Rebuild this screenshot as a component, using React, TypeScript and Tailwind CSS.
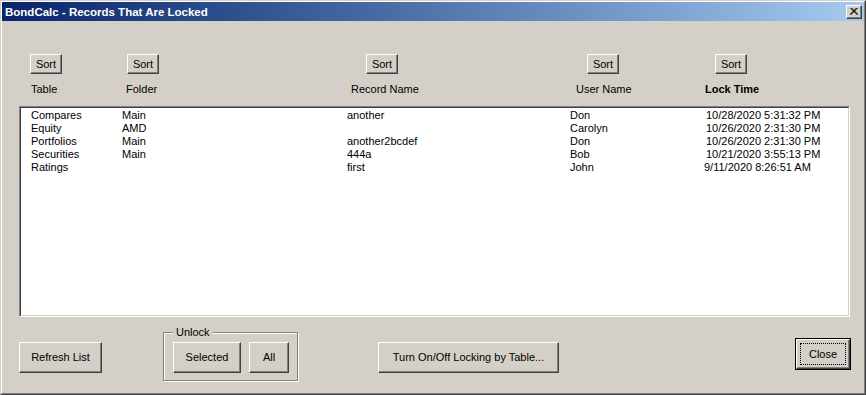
import React from "react";

const font = { fontFamily: '"Liberation Sans", Arial, sans-serif' };

function WinButton({
  children,
  className = "",
}: {
  children: React.ReactNode;
  className?: string;
}) {
  return (
    <div
      className={
        "flex items-center justify-center border border-t-white border-l-white border-r-[#404040] border-b-[#404040] bg-[#d4d0c8] shadow-[inset_-1px_-1px_#808080] text-[11px] leading-[13px] text-black shrink-0 " +
        className
      }
    >
      {children}
    </div>
  );
}

const rows = [
  ["Compares", "Main", "another", "Don", "10/28/2020 5:31:32 PM"],
  ["Equity", "AMD", "", "Carolyn", "10/26/2020 2:31:30 PM"],
  ["Portfolios", "Main", "another2bcdef", "Don", "10/26/2020 2:31:30 PM"],
  ["Securities", "Main", "444a", "Bob", "10/21/2020 3:55:13 PM"],
  ["Ratings", "", "first", "John", "9/11/2020 8:26:51 AM"],
];

export default function App() {
  return (
    <div className="w-[866px] h-[395px] bg-[#d4d0c8] text-black" style={font}>
      <div className="w-full h-full border border-t-[#d4d0c8] border-l-[#d4d0c8] border-r-[#404040] border-b-[#404040] flex flex-col">
        <div className="flex-1 border border-t-white border-l-white border-r-[#808080] border-b-[#808080] flex flex-col">
          {/* Title bar */}
          <div className="h-[19px] flex items-center justify-between pl-[3px] pr-[2px] bg-gradient-to-r from-[#0a246a] to-[#a6caf0]">
            <span className="text-white font-bold text-[11.5px] leading-[14px]">
              BondCalc - Records That Are Locked
            </span>
            <div className="w-[16px] h-[14px] flex items-center justify-center border border-t-white border-l-white border-r-[#404040] border-b-[#404040] bg-[#d4d0c8] shadow-[inset_-1px_-1px_#808080]">
              <svg width="8" height="7" viewBox="0 0 8 7" className="block">
                <path d="M0.5 0 L7.5 7 M1.5 0 L8 6.5 M7.5 0 L0.5 7 M6.5 0 L0 6.5" stroke="#000" strokeWidth="1" fill="none" />
              </svg>
            </div>
          </div>

          {/* Sort buttons */}
          <div className="flex mt-[33px]">
            <WinButton className="ml-[28px] w-[32px] h-[20px]">Sort</WinButton>
            <WinButton className="ml-[65px] w-[32px] h-[20px]">Sort</WinButton>
            <WinButton className="ml-[207px] w-[32px] h-[20px]">Sort</WinButton>
            <WinButton className="ml-[189px] w-[32px] h-[20px]">Sort</WinButton>
            <WinButton className="ml-[96px] w-[32px] h-[20px]">Sort</WinButton>
          </div>

          {/* Column labels */}
          <div className="flex mt-[9px] text-[11px] leading-[13px]">
            <span className="ml-[29px] w-[95px]">Table</span>
            <span className="w-[225px]">Folder</span>
            <span className="w-[225px]">Record Name</span>
            <span className="w-[129px]">User Name</span>
            <span className="font-bold">Lock Time</span>
          </div>

          {/* List */}
          <div className="ml-[17px] mt-[10px] w-[831px] h-[211px] border border-t-[#808080] border-l-[#808080] border-r-white border-b-white">
            <div className="w-full h-full bg-white border border-t-[#404040] border-l-[#404040] border-r-[#d4d0c8] border-b-[#d4d0c8] pt-[1px] pl-[10px] text-[11px] leading-[13px]">
              {rows.map((r, i) => (
                <div key={i} className="flex h-[13px]">
                  <span className="w-[91px]">{r[0]}</span>
                  <span className="w-[225px]">{r[1]}</span>
                  <span className="w-[223px]">{r[2]}</span>
                  <span className="w-[136px]">{r[3]}</span>
                  <span className={r[4].startsWith("9/") ? "-ml-[2px]" : ""}>{r[4]}</span>
                </div>
              ))}
            </div>
          </div>

          {/* Bottom buttons */}
          <div className="flex items-start">
            <WinButton className="ml-[17px] mt-[25px] w-[83px] h-[31px]">Refresh List</WinButton>

            <div className="relative ml-[61px] mt-[15px] w-[135px] h-[49px] border border-[#808080] shadow-[1px_1px_0_white,inset_1px_1px_0_white] flex items-start">
              <span className="absolute left-[9px] -top-[7px] px-[3px] bg-[#d4d0c8] text-[11px] leading-[13px]">
                Unlock
              </span>
              <WinButton className="ml-[9px] mt-[9px] w-[68px] h-[31px]">Selected</WinButton>
              <WinButton className="ml-[8px] mt-[9px] w-[40px] h-[31px]">All</WinButton>
            </div>

            <WinButton className="ml-[80px] mt-[25px] w-[181px] h-[31px]">
              Turn On/Off Locking by Table...
            </WinButton>

            <div className="ml-[236px] mt-[21px] w-[56px] h-[32px] border border-black">
              <div className="relative w-full h-full flex items-center justify-center border border-t-white border-l-white border-r-[#404040] border-b-[#404040] shadow-[inset_-1px_-1px_#808080] text-[11px] leading-[13px]">
                <span className="absolute inset-[3px] border border-dotted border-black" />
                Close
              </div>
            </div>
          </div>
        </div>
      </div>
    </div>
  );
}
